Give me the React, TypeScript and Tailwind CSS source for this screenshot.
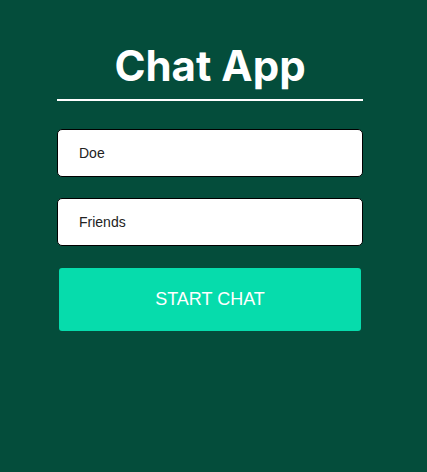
export default function App() {
  return (
    <div className="min-h-[472px] w-full bg-[#044d3b] font-['Liberation_Sans',Arial,sans-serif]">
      <div className="ml-[57px] flex w-[306px] flex-col pt-[36px]">
        {/* Header */}
        <h1 className="text-center font-['Inter',sans-serif] text-[42px] font-bold leading-[60px] text-white">
          Chat App
        </h1>
        <div className="mt-[3px] h-[2px] w-full bg-white" />

        {/* Form */}
        <form className="mt-[28px] flex flex-col" onSubmit={(e) => e.preventDefault()}>
          <input
            className="h-[48px] w-full rounded-[5px] border border-black bg-white px-[21px] text-[14px] text-[#222] outline-none"
            defaultValue="Doe"
          />
          <input
            className="mt-[21px] h-[48px] w-full rounded-[5px] border border-black bg-white px-[21px] text-[14px] text-[#222] outline-none"
            defaultValue="Friends"
          />
          <button
            type="submit"
            className="mx-[2px] mt-[22px] h-[63px] rounded-[3px] bg-[#06dcac] text-[18px] text-white"
          >
            START CHAT
          </button>
        </form>
      </div>
    </div>
  );
}
